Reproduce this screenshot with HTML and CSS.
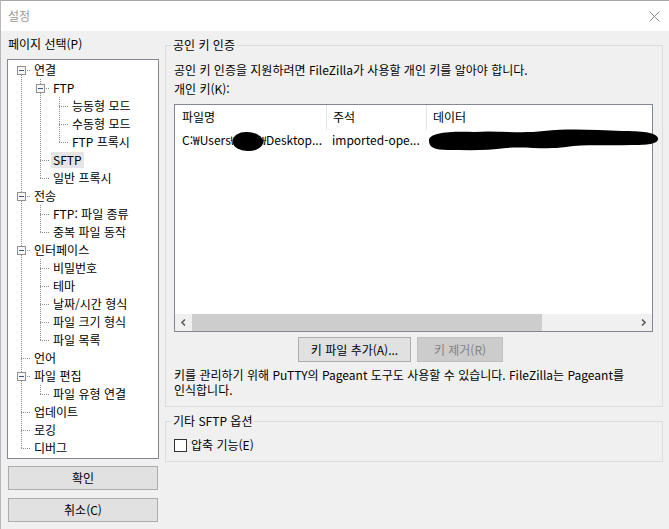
FILE: index.html
```html
<!DOCTYPE html>
<html lang="ko">
<head>
<meta charset="utf-8">
<title>설정</title>
<link rel="stylesheet" href="styles.css">
</head>
<body>
<div class="window">
  <div class="titlebar">
    <span class="title">설정</span>
    <svg class="close" width="11" height="11" viewBox="0 0 11 11"><path d="M0.5 0.5 L10.5 10.5 M10.5 0.5 L0.5 10.5" stroke="#8a8a8a" stroke-width="1" fill="none"/></svg>
  </div>
  <div class="main">
    <div class="left">
      <div class="pane-label">페이지 선택(P)</div>
      <div class="tree">
        <div class="row"><span class="c f"><i class="x"></i></span><span class="lbl">연결</span></div>
        <div class="row"><span class="c g"></span><span class="c t"><i class="x"></i></span><span class="lbl">FTP</span></div>
        <div class="row"><span class="c g"></span><span class="c g"></span><span class="c t"></span><span class="lbl">능동형 모드</span></div>
        <div class="row"><span class="c g"></span><span class="c g"></span><span class="c t"></span><span class="lbl">수동형 모드</span></div>
        <div class="row"><span class="c g"></span><span class="c g"></span><span class="c l"></span><span class="lbl">FTP 프록시</span></div>
        <div class="row"><span class="c g"></span><span class="c t"></span><span class="lbl sel">SFTP</span></div>
        <div class="row"><span class="c g"></span><span class="c l"></span><span class="lbl">일반 프록시</span></div>
        <div class="row"><span class="c t"><i class="x"></i></span><span class="lbl">전송</span></div>
        <div class="row"><span class="c g"></span><span class="c t"></span><span class="lbl">FTP: 파일 종류</span></div>
        <div class="row"><span class="c g"></span><span class="c l"></span><span class="lbl">중복 파일 동작</span></div>
        <div class="row"><span class="c t"><i class="x"></i></span><span class="lbl">인터페이스</span></div>
        <div class="row"><span class="c g"></span><span class="c t"></span><span class="lbl">비밀번호</span></div>
        <div class="row"><span class="c g"></span><span class="c t"></span><span class="lbl">테마</span></div>
        <div class="row"><span class="c g"></span><span class="c t"></span><span class="lbl">날짜/시간 형식</span></div>
        <div class="row"><span class="c g"></span><span class="c t"></span><span class="lbl">파일 크기 형식</span></div>
        <div class="row"><span class="c g"></span><span class="c l"></span><span class="lbl">파일 목록</span></div>
        <div class="row"><span class="c t"></span><span class="lbl">언어</span></div>
        <div class="row"><span class="c t"><i class="x"></i></span><span class="lbl">파일 편집</span></div>
        <div class="row"><span class="c g"></span><span class="c l"></span><span class="lbl">파일 유형 연결</span></div>
        <div class="row"><span class="c t"></span><span class="lbl">업데이트</span></div>
        <div class="row"><span class="c t"></span><span class="lbl">로깅</span></div>
        <div class="row"><span class="c l"></span><span class="lbl">디버그</span></div>
      </div>
      <button class="btn side ok">확인</button>
      <button class="btn side cancel">취소(C)</button>
    </div>
    <div class="right">
      <fieldset class="group g1">
        <legend>공인 키 인증</legend>
        <p class="line">공인 키 인증을 지원하려면 FileZilla가 사용할 개인 키를 알아야 합니다.</p>
        <p class="line second">개인 키(K):</p>
        <div class="list">
          <div class="lhead">
            <div class="col c1">파일명</div>
            <div class="col c2">주석</div>
            <div class="col c3">데이터</div>
          </div>
          <div class="lrow">
            <div class="col c1">C:₩Users₩<span class="redact"></span>₩Desktop...</div>
            <div class="col c2">imported-ope...</div>
            <div class="col c3"><svg class="scribble" width="234" height="28" viewBox="0 0 234 28"><path d="M3 15 C2 7 22 5 48 6 C70 4 92 8 118 5 C145 2 170 4 196 5 C215 5 230 6 232 12 C233 18 222 19 205 19 C180 20 160 18 140 21 C118 24 100 20 80 22 C60 25 40 24 22 24 C8 24 3 21 3 15 Z" fill="#000"/></svg></div>
          </div>
          <div class="lspace"></div>
          <div class="hscroll">
            <span class="arr"><svg width="5" height="7" viewBox="0 0 5 7"><path d="M4 0.5 L1 3.5 L4 6.5" fill="none" stroke="#606060" stroke-width="1.6"/></svg></span>
            <div class="track"><div class="thumb"></div></div>
            <span class="arr"><svg width="5" height="7" viewBox="0 0 5 7"><path d="M1 0.5 L4 3.5 L1 6.5" fill="none" stroke="#606060" stroke-width="1.6"/></svg></span>
          </div>
        </div>
        <div class="btnrow">
          <button class="btn add">키 파일 추가(A)...</button>
          <button class="btn remove" disabled>키 제거(R)</button>
        </div>
        <p class="para"><span class="pl">키를 관리하기 위해 PuTTY의 Pageant 도구도 사용할 수 있습니다. FileZilla는 Pageant를</span><span class="pl">인식합니다.</span></p>
      </fieldset>
      <fieldset class="group g2">
        <legend>기타 SFTP 옵션</legend>
        <label class="chk"><span class="box"></span>압축 기능(E)</label>
      </fieldset>
    </div>
  </div>
</div>
</body>
</html>
```

FILE: styles.css
```css
* { box-sizing: border-box; }
html, body { margin: 0; padding: 0; }
body {
  width: 669px;
  height: 529px;
  overflow: hidden;
  background: #f0f0f0;
  font-family: "Noto Sans CJK KR", "Noto Sans", sans-serif;
  font-size: 12px;
  color: #000;
}
.window {
  width: 669px;
  height: 529px;
  border-top: 1px solid #a8a8a8;
  border-left: 1px solid #b8b8b8;
  background: #f0f0f0;
}
.titlebar {
  height: 30px;
  background: #fff;
  display: flex;
  align-items: center;
  justify-content: space-between;
  padding: 0 9px 0 7px;
}
.title { color: #9a9a9a; line-height: 14px; }
.close { display: block; }

.main {
  display: flex;
  gap: 6px;
  padding: 6px 6px 0 6px;
}
.left {
  width: 152px;
  flex: none;
  display: flex;
  flex-direction: column;
}
.pane-label {
  line-height: 14px;
  margin: 0 0 8px 1px;
  white-space: nowrap;
}
.tree {
  height: 400px;
  border: 1px solid #828790;
  background: #fff;
  padding: 1px 0 0 4px;
}
.row {
  display: flex;
  height: 18px;
}
.c {
  display: block;
  flex: none;
  width: 19px;
  height: 18px;
  background-repeat: no-repeat;
}
.g {
  background-image: repeating-linear-gradient(to bottom, #8c8c8c 0 1px, transparent 1px 2px);
  background-position: 9px 0;
  background-size: 1px 18px;
}
.t {
  background-image: repeating-linear-gradient(to bottom, #8c8c8c 0 1px, transparent 1px 2px),
                    repeating-linear-gradient(to right, #8c8c8c 0 1px, transparent 1px 2px);
  background-position: 9px 0, 9px 9px;
  background-size: 1px 18px, 10px 1px;
}
.l {
  background-image: repeating-linear-gradient(to bottom, #8c8c8c 0 1px, transparent 1px 2px),
                    repeating-linear-gradient(to right, #8c8c8c 0 1px, transparent 1px 2px);
  background-position: 9px 0, 9px 9px;
  background-size: 1px 10px, 10px 1px;
}
.f {
  background-image: repeating-linear-gradient(to bottom, #8c8c8c 0 1px, transparent 1px 2px),
                    repeating-linear-gradient(to right, #8c8c8c 0 1px, transparent 1px 2px);
  background-position: 9px 10px, 9px 9px;
  background-size: 1px 8px, 10px 1px;
}
.x {
  display: block;
  width: 9px;
  height: 9px;
  margin: 5px 0 0 5px;
  border: 1px solid #919191;
  background: linear-gradient(#3b5787, #3b5787) no-repeat 1px 3px / 5px 1px, #f7f7f7;
}
.lbl {
  line-height: 16px;
  margin: 1px 0 1px 1px;
  padding: 0 2px;
  white-space: nowrap;
}
.sel { background: #e5e5e5; }

.btn {
  font: inherit;
  font-size: 12px;
  color: #000;
  background: #e1e1e1;
  border: 1px solid #adadad;
  padding: 0;
  line-height: 20px;
  border-radius: 0;
}
.side {
  width: 150px;
  height: 24px;
  margin-left: 1px;
}
.ok { margin-top: 7px; }
.cancel { margin-top: 8px; }

.right { flex: 1; min-width: 0; }
.group {
  margin: 1px 0 0 0;
  padding: 10px 8px 9px 8px;
  border: 1px solid #dcdcdc;
  min-width: 0;
}
.group legend {
  padding: 0 2px;
  margin-left: -3px;
  line-height: 14px;
  white-space: nowrap;
}
.line {
  margin: 0;
  line-height: 16px;
  white-space: nowrap;
}
.second { margin-top: 3px; }
.list {
  margin-top: 7px;
  width: 479px;
  height: 228px;
  border: 1px solid #828790;
  background: #fff;
  display: flex;
  flex-direction: column;
}
.lhead, .lrow { display: flex; }
.lhead { height: 25px; }
.lrow { height: 20px; }
.col {
  flex: none;
  white-space: nowrap;
  overflow: visible;
}
.c1 { width: 151px; padding-left: 7px; }
.c2 { width: 100px; padding-left: 6px; }
.c3 { flex: 1; }
.lhead .col { line-height: 24px; }
.lhead .c2, .lhead .c3 { border-left: 1px solid #e5e5e5; padding-left: 6px; }
.lrow .col { line-height: 20px; }
.redact {
  display: inline-block;
  width: 30px;
  height: 19px;
  margin: 0 -4px 0 -4px;
  border-radius: 45% 55% 50% 50%;
  background: #000;
  vertical-align: middle;
}
.scribble { display: block; margin: -4px 0 0 0; }
.lspace { flex: 1; }
.hscroll {
  height: 17px;
  display: flex;
  background: #f0f0f0;
}
.arr {
  width: 17px;
  flex: none;
  display: flex;
  align-items: center;
  justify-content: center;
}
.arr svg { display: block; }
.track { flex: 1; }
.thumb { width: 350px; height: 100%; background: #cdcdcd; }

.btnrow {
  display: flex;
  gap: 6px;
  margin-top: 5px;
  padding-left: 124px;
}
.add { width: 113px; height: 25px; }
.remove {
  width: 86px;
  height: 25px;
  background: #cccccc;
  border-color: #bfbfbf;
  color: #838383;
}
.para {
  margin: 5px 0 0 0;
  white-space: nowrap;
}
.pl {
  display: block;
  height: 15px;
  line-height: 15px;
}
.g2 {
  margin-top: 7px;
  padding-bottom: 9px;
}
.chk {
  display: flex;
  align-items: center;
  gap: 4px;
  line-height: 14px;
  height: 14px;
}
.box {
  width: 13px;
  height: 13px;
  border: 1px solid #333;
  background: #fff;
}
```
